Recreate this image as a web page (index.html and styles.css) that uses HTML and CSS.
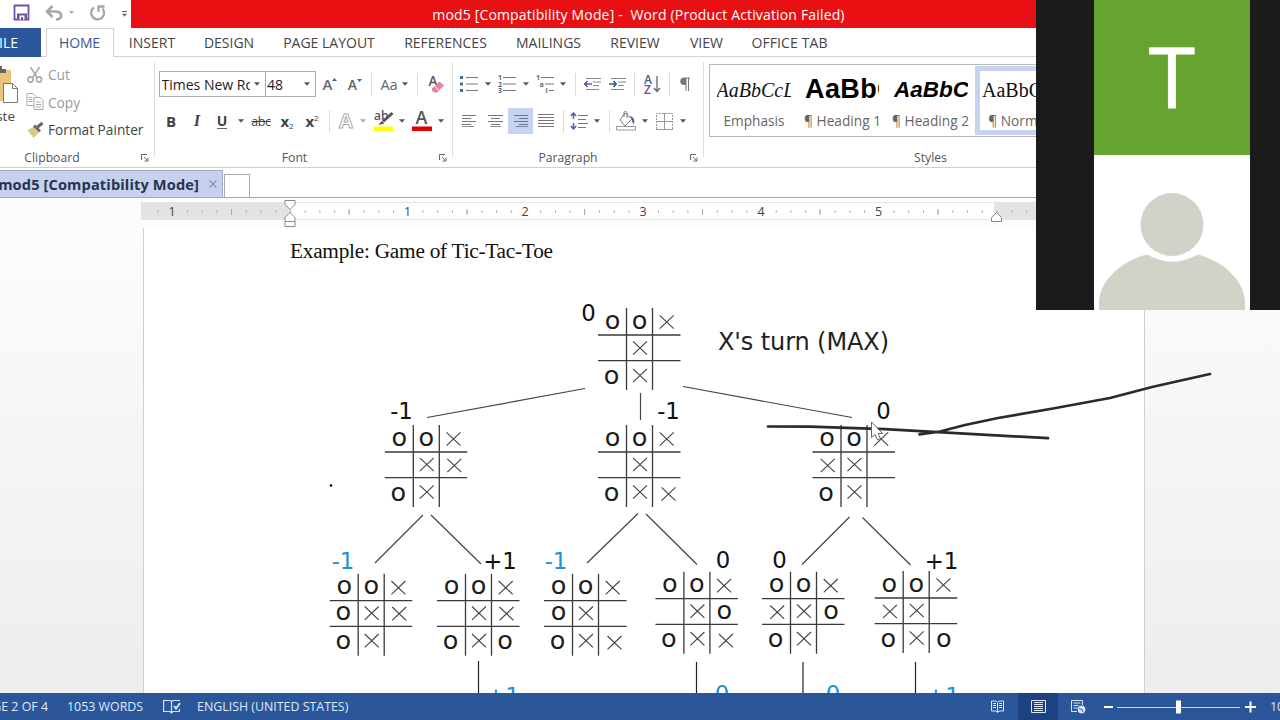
FILE: index.html
```html
<!DOCTYPE html>
<html lang="en">
<head>
<meta charset="utf-8">
<title>mod5 [Compatibility Mode] - Word</title>
<link rel="stylesheet" href="styles.css">
</head>
<body>
<svg class="defs" width="0" height="0">
  <defs>
    <symbol id="caret" viewBox="0 0 6 4"><path d="M0 .3h6L3 3.7z" fill="#555"/></symbol>
    <symbol id="launch" viewBox="0 0 8 8"><path d="M.5 6V.5H6M3 3l3.5 3.5M7 3.5V7H3.5" fill="none" stroke="#666"/></symbol>
    <path id="grid" d="M0 0V82M26 0V82M-28.5 27H54M-28.5 52.7H54" fill="none" stroke="#3a3a3a" stroke-width="1.3"/>
    <path id="x" d="M-7-6.7L7 6.7M7-6.7L-7 6.7" fill="none" stroke="#444" stroke-width="1.15"/>
  </defs>
</svg>
<div class="app">
  <header class="titlebar">
    <div class="quick">
      <svg width="132" height="28" viewBox="0 0 132 28">
        <path d="M14.5 5.5h14v14h-14z" fill="#fff" stroke="#7052a0" stroke-width="1.8"/><path d="M17 13.5h10v6H17z" fill="#7052a0"/><path d="M19.5 15.5h5v4h-5z" fill="#fff"/><path d="M21 17h2v3h-2z" fill="#7052a0"/>
        <path d="M48 11.5h7c8 0 8 8 1 8M52.500 6l-5.500 5.500 5.500 5.500" fill="none" stroke="#a6a6a6" stroke-width="2.600"/>
        <path d="M69 11h5l-2.500 3z" fill="#aaa"/>
        <path d="M94 7.500a6.500 6.500 0 1 0 8.500 1M98.500 12V6.500h6" fill="none" stroke="#a6a6a6" stroke-width="2.300"/>
        <path d="M122 11.500h5" stroke="#666"/><path d="M122 13.800h5l-2.500 3z" fill="#666"/>
      </svg>
    </div>
    <div class="title">mod5 [Compatibility Mode] -&nbsp; Word (Product Activation Failed)</div>
  </header>

  <nav class="tabs">
    <span class="file">FILE</span><span class="home">HOME</span><span class="t1">INSERT</span><span class="t2">DESIGN</span><span class="t3">PAGE LAYOUT</span><span class="t4">REFERENCES</span><span class="t5">MAILINGS</span><span class="t6">REVIEW</span><span class="t7">VIEW</span><span class="t8">OFFICE TAB</span>
  </nav>

  <section class="ribbon">
    <div class="group clipboard">
      <div class="body">
        <div class="paste">
          <svg width="20" height="42" viewBox="0 0 20 42"><path d="M0 8h11v31H0z" fill="#e8c47c"/><path d="M0 9V4h2v3h4v4H0z" fill="#666"/><path d="M3.500 21.500h9l5 5v14h-14z" fill="#fff" stroke="#777"/><path d="M12.500 21.500v5h5" fill="none" stroke="#777"/></svg>
          <span>Paste</span>
        </div>
        <ul class="cmds">
          <li class="off"><svg width="18" height="18" viewBox="0 0 18 18" fill="none" stroke="#aaa" stroke-width="1.600"><path d="M4 1l7 11M13 1L6 12"/><circle cx="4" cy="13.500" r="2.600"/><circle cx="12.500" cy="13.500" r="2.600"/></svg>Cut</li>
          <li class="off"><svg width="18" height="18" viewBox="0 0 18 18" fill="#fff" stroke="#aaa"><path d="M.5.500h6l3 3v9h-9z"/><path d="M2 4.500h4M2 6.500h4M2 8.500h4"/><path d="M7.500 4.500h6l3 3v9h-9z"/><path d="M9.500 9h5M9.500 11.500h5M9.500 14h5"/></svg>Copy</li>
          <li><svg width="18" height="18" viewBox="0 0 18 18"><path d="M1 9l6-3 5 6-5 5z" fill="#d8c883"/><path d="M6.500 5.500l2-2 6 6-2 2z" fill="#666"/><path d="M11 6l5-4" stroke="#666" stroke-width="3"/></svg>Format Painter</li>
        </ul>
      </div>
      <div class="label">Clipboard<svg class="launch" width="8" height="8"><use href="#launch"/></svg></div>
    </div>

    <div class="group font">
      <div class="body rows">
        <div class="row f1">
          <span class="box"><b class="clip">Times New Roman</b><svg width="6" height="4"><use href="#caret"/></svg></span>
          <span class="box size"><b>48</b><svg width="6" height="4"><use href="#caret"/></svg></span>
          <span class="grow">A<svg width="5" height="3" viewBox="0 0 5 3"><path d="M0 3L2.500 0 5 3z" fill="#3f5fb0"/></svg></span>
          <span class="grow small">A<svg width="5" height="3" viewBox="0 0 5 3"><path d="M0 0h5L2.500 3z" fill="#3f5fb0"/></svg></span>
          <i class="sep"></i>
          <span class="case">Aa<svg width="6" height="4"><use href="#caret"/></svg></span>
          <i class="sep"></i>
          <svg width="18" height="20" viewBox="0 0 18 20"><text x="1.500" y="12" class="glyph" font-size="13.500">A</text><path d="M5 14.500l7.500-7 4.500 4-7 7H7l-2-2z" fill="#e783a2"/><path d="M7.500 12l4 4" stroke="#fff"/></svg>
        </div>
        <div class="row f2">
          <span class="fmt bold">B</span><span class="fmt ital">I</span><span class="fmt under">U</span>
          <svg width="6" height="4"><use href="#caret"/></svg>
          <span class="strike">abc</span>
          <span class="script">x<sub>2</sub></span><span class="script">x<sup>2</sup></span>
          <i class="sep"></i>
          <svg width="18" height="20" viewBox="0 0 18 20"><text x="2" y="17" font-family="Open Sans" font-size="20" font-weight="700" fill="#fff" stroke="#aaa" stroke-width="1">A</text></svg>
          <svg class="faint" width="6" height="4"><use href="#caret"/></svg>
          <svg width="20" height="22" viewBox="0 0 20 22"><text x="0" y="9.500" class="glyph" font-size="12">ab</text><path d="M18.500 3L9 11.500" stroke="#555" stroke-width="3"/><path d="M4.500 15l3-4 3 2.500z" fill="#555"/><path d="M0 16.500h19v4.500H0z" fill="#ff0"/></svg>
          <svg width="6" height="4"><use href="#caret"/></svg>
          <svg width="20" height="22" viewBox="0 0 20 22"><text x="3.500" y="14" class="glyph" font-size="18">A</text><path d="M0 16.500h20v4.500H0z" fill="#e00000"/></svg>
          <svg width="6" height="4"><use href="#caret"/></svg>
        </div>
      </div>
      <div class="label">Font<svg class="launch" width="8" height="8"><use href="#launch"/></svg></div>
    </div>

    <div class="group para">
      <div class="body rows">
        <div class="row p1">
          <svg width="18" height="18" viewBox="0 0 18 18"><path d="M6 2.500h12M6 9h12M6 15.500h12" stroke="#777" stroke-width="1.200"/><path d="M0 1h3v3H0zM0 7.500h3v3H0zM0 14h3v3H0z" fill="#4a7088"/></svg>
          <svg width="6" height="4"><use href="#caret"/></svg>
          <svg width="18" height="18" viewBox="0 0 18 18"><path d="M5 2.500h13M5 9h13M5 15.500h13" stroke="#777" stroke-width="1.200"/><g class="digit"><text x="0" y="5">1</text><text x="0" y="11.500">2</text><text x="0" y="18">3</text></g></svg>
          <svg width="6" height="4"><use href="#caret"/></svg>
          <svg width="18" height="18" viewBox="0 0 18 18"><path d="M5 2.500h13M9 9h9M13 15.500h5" stroke="#777" stroke-width="1.200"/><g class="digit"><text x="0" y="5">1</text><text x="3.500" y="11.500">a</text><text x="9.500" y="18">i</text></g></svg>
          <svg width="6" height="4"><use href="#caret"/></svg>
          <i class="sep"></i>
          <svg width="17" height="12" viewBox="0 0 17 12" fill="none"><path d="M2 .500h15M9 4h8M9 7.500h6M2 11.500h13" stroke="#888"/><path d="M0 6h8M3.500 3L.800 6l2.700 3" stroke="#6752b4" stroke-width="1.600"/></svg>
          <svg width="17" height="12" viewBox="0 0 17 12" fill="none"><path d="M2 .500h15M9 4h8M9 7.500h6M2 11.500h13" stroke="#888"/><path d="M0 6h7M4.500 3L7.200 6l-2.700 3" stroke="#345d91" stroke-width="1.600"/></svg>
          <i class="sep"></i>
          <svg width="17" height="19" viewBox="0 0 17 19"><g font-family="Open Sans" font-size="12" font-weight="600"><text x="0" y="9" fill="#336b91">A</text><text x="0" y="18.500" fill="#75479c">Z</text></g><path d="M13 1v15M10 13l3 3.500 3-3.500" fill="none" stroke="#666" stroke-width="1.300"/></svg>
          <i class="sep"></i>
          <svg width="11" height="14" viewBox="0 0 11 14"><path d="M5.500 8H4a3.500 3.500 0 0 1 0-7.500h6v1H9V14H8V1.500H6.500V14h-1z" fill="#777"/></svg>
        </div>
        <div class="row p2">
          <svg width="14" height="12" viewBox="0 0 14 12"><path d="M0 .500h14M0 3.500h9M0 6.500h14M0 9.500h9M0 11.700h12" stroke="#777"/></svg>
          <svg width="15" height="12" viewBox="0 0 15 12"><path d="M0 .500h15M3 3.500h9M0 6.500h15M3 9.500h9M2 11.700h11" stroke="#777"/></svg>
          <span class="on"><svg width="14" height="12" viewBox="0 0 14 12"><path d="M0 .500h14M5 3.500h9M0 6.500h14M5 9.500h9M2 11.700h12" stroke="#65779c"/></svg></span>
          <svg width="16" height="14" viewBox="0 0 16 14"><path d="M0 .500h16M0 3.500h16M0 6.500h16M0 9.500h16M0 12.500h16" stroke="#777"/></svg>
          <i class="sep"></i>
          <svg width="18" height="18" viewBox="0 0 18 18" fill="none"><path d="M8 3.500h10M8 7.500h8M8 11.500h10M8 15.500h8" stroke="#777"/><path d="M3.500 1v6M3.500 11v6M.800 4l2.700-3 2.700 3M.800 14l2.700 3 2.700-3" stroke="#5060a8" stroke-width="1.500"/></svg>
          <svg width="6" height="4"><use href="#caret"/></svg>
          <i class="sep"></i>
          <svg width="20" height="20" viewBox="0 0 20 20"><path d="M9 2l7 6-7 7-5-6z" fill="#fff" stroke="#777"/><path d="M8 6V1.500c0-1.500 3-1.500 3 0V7" fill="none" stroke="#777"/><path d="M14 5c4 1 5 4 4 8-2-1-2-3-2-5z" fill="#4a6797"/><path d="M.500 15.500h19v3.500H.500z" fill="#fff" stroke="#999"/></svg>
          <svg width="6" height="4"><use href="#caret"/></svg>
          <svg width="17" height="17" viewBox="0 0 17 17" fill="none"><path d="M.500 16V.500h16V16" stroke="#999" stroke-dasharray="2 1"/><path d="M8.500 0v17M0 8.500h17M0 16.500h17" stroke="#999"/></svg>
          <svg width="6" height="4"><use href="#caret"/></svg>
        </div>
      </div>
      <div class="label">Paragraph<svg class="launch" width="8" height="8"><use href="#launch"/></svg></div>
    </div>

    <div class="group styles">
      <div class="gallery">
        <div class="style"><span class="s-em">AaBbCcL</span><small>Emphasis</small></div>
        <div class="style"><span class="s-h1">AaBbC</span><small>¶ Heading 1</small></div>
        <div class="style"><span class="s-h2">AaBbC</span><small>¶ Heading 2</small></div>
        <div class="style sel"><span class="s-no">AaBbCc</span><small>¶ Normal</small></div>
      </div>
      <div class="label">Styles</div>
    </div>
  </section>

  <div class="doctabs">
    <div class="doctab">mod5 [Compatibility Mode]<svg width="8" height="8" viewBox="0 0 8 8"><path d="M.500.500l7 7M7.500.500l-7 7" stroke="#8794b3" stroke-width="1.300"/></svg></div>
    <div class="newtab"></div>
  </div>

  <div class="ruler">
    <svg width="1280" height="30" viewBox="0 198 1280 30">
      <path d="M141 202H290V220H141zM994 202H1280V220H994z" fill="#e3e3e3"/>
      <path d="M290 202H994V220H290z" fill="#fff"/>
      <path d="M290 202.500H994M290 219.500H994" stroke="#e6e6e6"/>
      <path d="M157.500 211.500H1040" stroke="#999" stroke-width="2" stroke-dasharray="1 13.720"/>
      <path d="M164 205h16v13h-16z" fill="#e3e3e3"/>
      <path d="M399 205h16v13h-16zM517 205h16v13h-16zM635 205h16v13h-16zM753 205h16v13h-16zM871 205h16v13h-16z" fill="#fff"/>
      <path d="M231.500 209v6M349 209v6M467 209v6M584.500 209v6M702.500 209v6M820 209v6M938 209v6" stroke="#aaa"/>
      <g class="nums"><text x="172" y="216">1</text><text x="407.500" y="216">1</text><text x="525" y="216">2</text><text x="643" y="216">3</text><text x="761" y="216">4</text><text x="878.500" y="216">5</text></g>
      <g fill="#fff" stroke="#888"><path d="M285 200.500h10v4l-5 5-5-5zM285 221.500v-4l5-5 5 5v4zM285 221.500h10v5h-10zM991.500 221.500v-4l5-5 5 5v4z"/></g>
    </svg>
  </div>

  <main class="canvas">
    <div class="page"></div>
    <svg class="drawing" width="1280" height="465" viewBox="0 228 1280 465">
      <text class="heading" x="290" y="258" textLength="263">Example: Game of Tic-Tac-Toe</text>
      <text class="turn" x="718" y="350" textLength="171">X's turn (MAX)</text>
      <path d="M585 388.500L427 417.500M683 386.500L852 417.500M640.500 393V420M423 515L375 563M431 515L481 564M638 513.500L587 563M646 514L697 564.500M849.500 517L802 564.500M862.500 517.500L910.500 565" fill="none" stroke="#444" stroke-width="1.200"/>
      <path d="M478.500 661V693M696.500 662V693M803 662V693M915.500 662V693" stroke="#222" stroke-width="1.200"/>
      <circle cx="331" cy="485.500" r="1.300"/>
      <g class="val">
        <text x="588.500" y="321">0</text><text x="401.500" y="419">-1</text><text x="668.500" y="419">-1</text><text x="883.500" y="419">0</text>
        <text x="500" y="569">+1</text><text x="723" y="568">0</text><text x="779.500" y="568">0</text><text x="941.500" y="568.500">+1</text>
        <g fill="#1b93dc"><text x="343" y="569">-1</text><text x="556" y="569">-1</text><text x="503" y="704">+1</text><text x="722" y="702">0</text><text x="833" y="702">0</text><text x="943" y="704">+1</text></g>
      </g>
      <g class="o">
        <g transform="translate(626.500 308)"><use href="#grid"/><text x="-14" y="20.500">o</text><text x="13" y="20.500">o</text><use href="#x" x="40.200" y="14"/><use href="#x" x="13.500" y="40"/><text x="-15" y="75.500">o</text><use href="#x" x="13.500" y="67.500"/></g>
        <g transform="translate(413.300 425)"><use href="#grid"/><text x="-14" y="20.500">o</text><text x="13" y="20.500">o</text><use href="#x" x="40.200" y="14"/><use href="#x" x="13.500" y="39.500"/><use href="#x" x="41" y="40.500"/><text x="-15" y="75.500">o</text><use href="#x" x="13.500" y="67"/></g>
        <g transform="translate(626.500 425)"><use href="#grid"/><text x="-14" y="20.500">o</text><text x="13" y="20.500">o</text><use href="#x" x="40.200" y="14"/><use href="#x" x="13.500" y="39.500"/><text x="-15" y="75.500">o</text><use href="#x" x="13.500" y="67"/><use href="#x" x="42" y="69"/></g>
        <g transform="translate(841 425)"><use href="#grid"/><text x="-14" y="20.500">o</text><text x="13" y="20.500">o</text><use href="#x" x="40.200" y="14"/><use href="#x" x="-13.300" y="40.500"/><use href="#x" x="13.500" y="39.500"/><text x="-15" y="75.500">o</text><use href="#x" x="13.500" y="67"/></g>
        <g transform="translate(358.200 573.700)"><use href="#grid"/><text x="-14" y="20.500">o</text><text x="13" y="20.500">o</text><use href="#x" x="40.200" y="14"/><text x="-15" y="46.500">o</text><use href="#x" x="13.500" y="39.500"/><use href="#x" x="41" y="40"/><text x="-15" y="75">o</text><use href="#x" x="13.500" y="67"/></g>
        <g transform="translate(465.500 573.700)"><use href="#grid"/><text x="-14" y="20.500">o</text><text x="13" y="20.500">o</text><use href="#x" x="40.200" y="14"/><use href="#x" x="13.500" y="39.500"/><use href="#x" x="41" y="40"/><text x="-15" y="75">o</text><use href="#x" x="13.500" y="67"/><text x="39.500" y="75">o</text></g>
        <g transform="translate(572.500 573.700)"><use href="#grid"/><text x="-14" y="20.500">o</text><text x="13" y="20.500">o</text><use href="#x" x="40.200" y="14"/><text x="-14" y="46">o</text><use href="#x" x="13.500" y="39.500"/><text x="-15" y="75">o</text><use href="#x" x="13.500" y="67"/><use href="#x" x="42" y="69"/></g>
        <g transform="translate(683.900 571.700)"><use href="#grid"/><text x="-14" y="20.500">o</text><text x="13" y="20.500">o</text><use href="#x" x="40.200" y="14"/><use href="#x" x="13.500" y="39.500"/><text x="40.500" y="47.300">o</text><text x="-15" y="75.500">o</text><use href="#x" x="13.500" y="67"/><use href="#x" x="42" y="69"/></g>
        <g transform="translate(790.500 571.700)"><use href="#grid"/><text x="-14" y="20.500">o</text><text x="13" y="20.500">o</text><use href="#x" x="40.200" y="14"/><use href="#x" x="-13.300" y="40.500"/><use href="#x" x="13.500" y="39.500"/><text x="40.500" y="47.300">o</text><text x="-15" y="75.500">o</text><use href="#x" x="13.500" y="67"/></g>
        <g transform="translate(903.200 571)"><use href="#grid"/><text x="-14" y="20.500">o</text><text x="13" y="20.500">o</text><use href="#x" x="40.200" y="14"/><use href="#x" x="-13.300" y="40.500"/><use href="#x" x="13.500" y="39.500"/><text x="-15" y="75.500">o</text><use href="#x" x="13.500" y="67"/><text x="40.500" y="75.500">o</text></g>
      </g>
      <path d="M768 426.500L810 426.700 885 429.200 1048 438.200M919.500 434.300L940 431.500 965 425 998 418 1053 408.500 1110 398 1152 387 1210 374" fill="none" stroke="#2a2a2a" stroke-width="2.700" stroke-linecap="round" stroke-linejoin="round"/>
      <path d="M871.500 422v15.500l3.500-3 2.500 5.500 3-1.200-2.500-5.300h4.500z" fill="#fff" stroke="#666"/>
    </svg>
  </main>

  <footer class="status">
    <span class="pg">PAGE 2 OF 4</span><span class="words">1053 WORDS</span>
    <svg class="proof" width="18" height="15" viewBox="0 0 18 15" fill="none" stroke="#d5e2f5" stroke-width="1.200"><path d="M8.500 2.500V13M8.500 2.500L7 1.500H.600v11H7l1.500 1.500 1.500-1.500h6.500V10M8.500 2.500L10 1.500h7"/><path d="M11 7l2 2.500L17 4" stroke-width="2"/></svg>
    <span class="lang">ENGLISH (UNITED STATES)</span>
    <div class="views">
      <span class="v1"><svg width="13" height="13" viewBox="0 0 13 13" fill="none" stroke="#dbe7f7"><path d="M6.500 2v11M.500 1h4.500l1.500 1.500L8 1h4.500v10H8l-1.500 1.500L5 11H.500zM2 3.500h3M2 5.500h3M2 7.500h3M8 3.500h3M8 5.500h3M8 7.500h3"/></svg></span>
      <span class="v2"><svg width="15" height="13" viewBox="0 0 15 13" fill="none" stroke="#dbe7f7"><path d="M.500.500h14v12H.500zM3 2.500h9M3 4.500h9M3 6.500h9M3 8.500h9M3 10.500h9"/></svg></span>
      <span class="v3"><svg width="15" height="14" viewBox="0 0 15 14" fill="none" stroke="#dbe7f7"><path d="M11.500 5V.500H.500v11H6M2.500 3h7M2.500 5.500h5M2.500 8h4"/><circle cx="10.500" cy="9.500" r="3.500" fill="#dbe7f7"/><path d="M8 8.500l3 1 1 2.500" stroke="#2b579a"/></svg></span>
      <svg width="152" height="16" viewBox="0 0 152 16"><path d="M0 8h9M141 8h11M146.500 2.500v11" stroke="#fff" stroke-width="2"/><path d="M13 8.500h123" stroke="#c7d5ea"/><path d="M72 1.500h5v13h-5z" fill="#fff"/></svg>
      <span class="zoom">100%</span>
    </div>
  </footer>

  <aside class="video">
    <div class="tile letter">T</div>
    <div class="tile"><svg width="155" height="155" viewBox="0 0 155 155"><g fill="#d2d2c9"><circle cx="78" cy="69.500" r="31.500"/><path d="M5 155v-7c0-22 22-42 48-48.500 16 9.500 35 9.500 51 0 26 7 47 26.500 47 48.500v7z"/></g></svg></div>
  </aside>
</div>
</body>
</html>
```
FILE: styles.css
```css
* { box-sizing: border-box; }
body { margin: 0; font-family: "Open Sans", "Noto Sans", sans-serif; color: #444; }
.defs { position: absolute; }
.app { position: relative; width: 1280px; height: 720px; overflow: hidden; display: flex; flex-direction: column; background: #fff; }
svg { flex: none; display: block; }

.titlebar { display: flex; height: 28px; flex: none; background: #e81012; }
.quick { width: 131px; background: #fff; overflow: hidden; }
.title { width: 1015px; text-align: center; color: #fff; font-size: 14px; line-height: 29px; letter-spacing: 0.16px; white-space: nowrap; }

.tabs { display: flex; height: 29px; flex: none; border-bottom: 1px solid #d4d4d4; font-size: 14px; line-height: 29px; white-space: nowrap; }
.tabs span { display: flex; justify-content: center; margin-left: 28px; }
.tabs .file { width: 41px; margin: 0; background: #2b579a; color: #fff; justify-content: flex-end; padding-right: 23px; height: 29px; }
.tabs .home { width: 68px; margin-left: 4.500px; height: 29px; border: 1px solid #d4d4d4; border-bottom: 0; background: #fff; color: #3b5794; line-height: 28px; letter-spacing: -0.2px; }
.tabs .t1 { width: 47px; margin-left: 15px; }
.tabs .t2 { width: 51px; }
.tabs .t3 { width: 93px; }
.tabs .t4 { width: 84px; }
.tabs .t5 { width: 66px; }
.tabs .t6 { width: 51px; }
.tabs .t7 { width: 34px; margin-left: 29px; }
.tabs .t8 { width: 76px; letter-spacing: 0.1px; }

.ribbon { display: flex; height: 111px; flex: none; border-bottom: 1px solid #cfcfcf; padding-top: 5px; }
.group { height: 105px; flex: none; display: flex; flex-direction: column; justify-content: space-between; background: linear-gradient(#dedede, #dedede) right top / 1px 95px no-repeat; }
.clipboard { width: 155px; }
.font { width: 298px; padding-left: 4px; }
.para { width: 251px; padding-left: 3px; }
.styles { width: 576px; padding-left: 5px; background: none; }
.label { height: 20px; line-height: 21px; font-size: 12.200px; text-align: center; position: relative; color: #555; }
.clipboard .label { padding-right: 51px; }
.font .label { padding-right: 23px; }
.para .label { padding-right: 24px; }
.styles .label { padding-right: 128px; }
.launch { position: absolute; right: 6px; top: 7px; }
.body { display: flex; height: 80px; }
.paste { width: 24px; height: 75px; display: flex; flex-direction: column; overflow: hidden; font-size: 13.500px; }
.paste span { width: 15px; display: flex; justify-content: flex-end; line-height: 20px; margin-top: 2px; }
.cmds { list-style: none; margin: -1px 0 0; padding: 0 0 0 2px; font-size: 13.700px; white-space: nowrap; }
.cmds li { display: flex; align-items: center; gap: 3px; height: 27.500px; }
.cmds .off { color: #999; }
.cmds svg { width: 19px; }

.rows { flex-direction: column; gap: 11px; padding-top: 9px; }
.row { display: grid; height: 26px; flex: none; align-items: center; justify-items: center; }
.f1 { grid-template-columns: 106px 51px 28px 22px 11px 34px 13px 24px; }
.f2 { grid-template-columns: 24px 28px 22px 16px 24px 28px 22px 13px 20px 14px 28px 8px 32px 6px; }
.p1 { grid-template-columns: 20px 18px 20px 18px 20px 15px 10px 25px 25px 9px 27px 7px 24px; padding-left: 3px; }
.p2 { grid-template-columns: 26px 26px 25px 25px 10px 22px 13px 12px 22px 16px 22px 16px; }
.sep { width: 1px; height: 23px; background: #dcdcdc; }
.box { display: flex; align-items: center; justify-content: space-between; width: 107px; height: 26px; border: 1px solid #ababab; padding: 0 5px 0 2px; font-size: 14px; color: #222; }
.box b { font-weight: 400; white-space: nowrap; overflow: hidden; }
.box .clip { width: 88px; }
.box.size { width: 51px; border-left: 0; padding-right: 5px; }
.grow { display: flex; font-size: 15px; font-weight: 600; color: #666; }
.grow svg { margin-top: 4px; }
.small { font-size: 14px; }
.case { display: flex; align-items: center; gap: 4px; font-size: 14.500px; color: #666; }
.glyph { font-family: "Open Sans", sans-serif; font-weight: 600; fill: #555; }
.fmt { font-weight: 700; font-size: 15px; line-height: 20px; }
.ital { font-family: "Liberation Serif", serif; font-style: italic; font-size: 16.500px; }
.under { font-size: 14px; line-height: 15px; border-bottom: 1.500px solid #666; height: 16px; font-weight: 700; }
.strike { font-size: 12.500px; text-decoration: line-through; letter-spacing: -0.4px; }
.script { font-weight: 700; font-size: 15px; line-height: 18px; white-space: nowrap; }
.script sub, .script sup { font-size: 8px; font-weight: 400; line-height: 0; }
.script sub { vertical-align: -2px; }
.script sup { vertical-align: 6px; }
.faint { opacity: 0.5; }
.digit { font: 700 7px "Open Sans", sans-serif; fill: #4a6d88; }
.on { width: 25px; height: 26px; background: #c5d3ef; display: flex; align-items: center; justify-content: center; }

.gallery { display: flex; height: 73px; margin-top: 2px; border: 1px solid #b8b8b8; padding-top: 1px; }
.style { width: 88px; height: 69px; display: flex; flex-direction: column; align-items: center; flex: none; white-space: nowrap; }
.style:first-child { width: 89px; }
.style span { width: 74px; height: 44px; padding-top: 4px; margin-left: -2px; overflow: hidden; color: #111; flex: none; }
.style small { font-size: 13.700px; line-height: 21px; color: #666; margin-left: -1px; }
.style .s-em { font: italic 20px/40px "Liberation Serif", serif; }
.style .s-h1 { font: bold 27px/40px "Liberation Sans", sans-serif; letter-spacing: 0.4px; padding-top: 3px; color: #000; }
.style .s-h2 { font: italic bold 22.500px/40px "Liberation Sans", sans-serif; color: #000; margin-left: 0; }
.style .s-no { font: 20px/40px "Liberation Serif", serif; margin: -5px 0 0; }
.sel { border: 5px solid #c5d3ef; }

.doctabs { display: flex; height: 30px; flex: none; border-bottom: 1px solid #a9a9a9; align-items: flex-end; }
.doctab { display: flex; align-items: center; justify-content: flex-end; gap: 10px; width: 223px; height: 27px; border: 1px solid #9fa9be; border-width: 1px 1px 0 0; background: #c6d1ef; padding-right: 5px; font-size: 14.600px; font-weight: 700; letter-spacing: 0.130px; color: #26344c; white-space: nowrap; overflow: hidden; line-height: 24px; }
.newtab { width: 26px; height: 23px; margin-left: 1px; border: 1px solid #aaa; border-bottom: 0; }
.ruler { height: 30px; flex: none; background: #fcfcfc; }
.nums { font: 12.500px "Open Sans", sans-serif; fill: #444; text-anchor: middle; }

.canvas { position: relative; display: flex; justify-content: center; height: 465px; flex: none; background: linear-gradient(#fcfcfc, #ededed); padding-left: 8px; }
.page { width: 1001.500px; height: 465px; background: #fff; border: 1px solid #d0d0d0; border-width: 0 1px; }
.drawing { position: absolute; left: 0; top: 0; }
.heading { font: 21.300px "Liberation Serif", serif; fill: #111; }
.turn { font: 24px "DejaVu Sans", sans-serif; fill: #222; }
.val { font: 22.800px "DejaVu Sans", sans-serif; fill: #111; text-anchor: middle; }
.o { font: 25.500px "DejaVu Sans", sans-serif; fill: #1c1c1c; text-anchor: middle; }

.status { display: flex; align-items: center; height: 27px; flex: none; background: #2b579a; color: #dfe9f7; font-size: 12.400px; white-space: nowrap; }
.pg { width: 48px; display: flex; justify-content: flex-end; }
.words { width: 77px; margin-left: 19px; }
.proof { margin-left: 19px; }
.lang { margin-left: 16px; }
.views { margin-left: auto; width: 303px; display: flex; align-items: center; height: 27px; }
.views span { display: flex; flex: none; align-items: center; justify-content: center; width: 40px; height: 27px; }
.views .v1 { width: 41px; }
.views .v2 { background: #1e4280; }
.views .v3 { width: 46px; padding-right: 5px; }
.views .zoom { margin-left: 14px; width: 30px; justify-content: flex-start; }

.video { position: absolute; right: 0; top: 0; width: 244px; height: 310px; padding-left: 58px; background: #1b1b1b; }
.tile { width: 156px; height: 155px; background: #fff; }
.letter { background: #66a32f; color: #fff; font: 84px/151px "Open Sans", sans-serif; text-align: center; -webkit-text-stroke: 0.8px #fff; }
```
